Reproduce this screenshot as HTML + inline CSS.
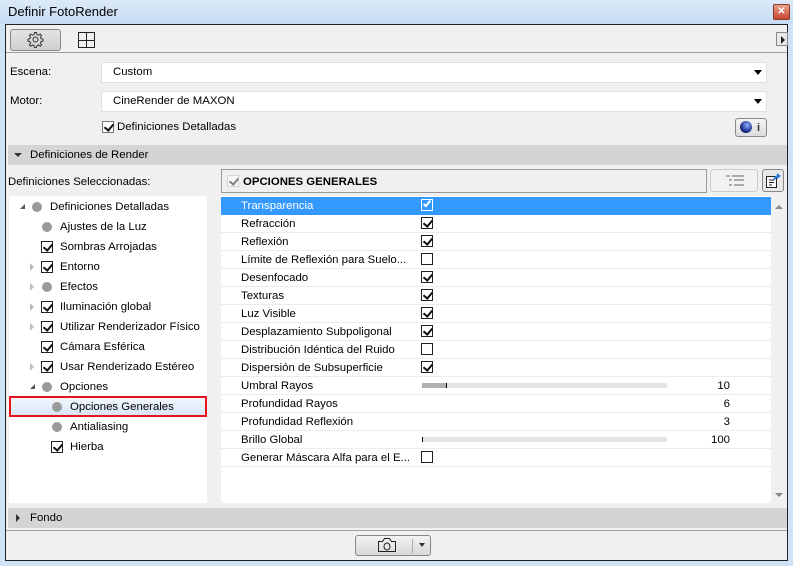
<!DOCTYPE html>
<html><head><meta charset="utf-8"><style>
*{box-sizing:border-box;margin:0;padding:0}
body{width:793px;height:566px;overflow:hidden;background:#cfe2f6;font-family:"Liberation Sans",sans-serif;font-size:11.4px;color:#000;position:relative}
.a{position:absolute}
.t{position:absolute;white-space:nowrap;line-height:14px}
.cb{position:absolute;width:12px;height:12px;border:1px solid #222;background:#fff}
.cb.c::after{content:"";position:absolute;left:3px;top:0px;width:4px;height:7px;border:solid #111;border-width:0 2px 2px 0;transform:rotate(40deg)}
.dot{position:absolute;width:10px;height:10px;border-radius:50%;background:#9a9a9a}
.row{position:absolute;left:221px;width:550px;height:18px;border-bottom:1px solid #ececec}
.tri{position:absolute;width:0;height:0}
</style></head><body>
<div class="a" style="left:0;top:0;width:793px;height:24px;background:linear-gradient(#dbe9f8,#c6dcf3)"></div>
<div class="t" style="left:8px;top:5px;font-size:13px">Definir FotoRender</div>
<div class="a" style="left:773px;top:4px;width:17px;height:16px;background:linear-gradient(#e8a08a,#c7442c);border:1px solid #8a3a2a;border-radius:2px;color:#fff;font-size:10px;font-weight:bold;text-align:center;line-height:14px">✕</div>
<div class="a" style="left:5px;top:24px;width:783px;height:537px;background:#f0f0f0;border:1px solid #222"></div>
<div class="a" style="left:10px;top:29px;width:51px;height:22px;border:1px solid #888;border-radius:3px;background:linear-gradient(#e4e4e4,#cfcfcf)"></div>
<svg class="a" style="left:27px;top:31px" width="17" height="17" viewBox="0 0 17 17"><circle cx="8.5" cy="8.5" r="2.5" fill="none" stroke="#333"/><path d="M7.5 1.5h2l.4 2 1.6.7 1.7-1.2 1.4 1.4-1.2 1.7.7 1.6 2 .4v2l-2 .4-.7 1.6 1.2 1.7-1.4 1.4-1.7-1.2-1.6.7-.4 2h-2l-.4-2-1.6-.7-1.7 1.2-1.4-1.4 1.2-1.7-.7-1.6-2-.4v-2l2-.4.7-1.6-1.2-1.7 1.4-1.4 1.7 1.2 1.6-.7z" fill="none" stroke="#333"/></svg>
<svg class="a" style="left:78px;top:32px" width="17" height="16"><rect x="0.5" y="0.5" width="16" height="15" fill="none" stroke="#222"/><path d="M8.5 1v14M1 8.5h15" stroke="#222"/></svg>
<div class="a" style="left:776px;top:32px;width:12px;height:14px;border:1px solid #888;background:#e8e8e8"></div>
<div class="tri" style="left:781px;top:36px;border-left:4px solid #222;border-top:4px solid transparent;border-bottom:4px solid transparent"></div>
<div class="a" style="left:6px;top:52px;width:781px;height:1px;background:#a0a0a0"></div>
<div class="t" style="left:10px;top:65px">Escena:</div>
<div class="a" style="left:101px;top:62px;width:666px;height:21px;background:#fff;border:1px solid #e0e0e0"></div>
<div class="t" style="left:113px;top:65px">Custom</div>
<div class="tri" style="left:754px;top:70px;border-top:5px solid #000;border-left:4px solid transparent;border-right:4px solid transparent"></div>
<div class="t" style="left:10px;top:94px">Motor:</div>
<div class="a" style="left:101px;top:91px;width:666px;height:21px;background:#fff;border:1px solid #e0e0e0"></div>
<div class="t" style="left:113px;top:94px">CineRender de MAXON</div>
<div class="tri" style="left:754px;top:99px;border-top:5px solid #000;border-left:4px solid transparent;border-right:4px solid transparent"></div>
<div class="cb c" style="left:102px;top:121px;border-color:#777"></div>
<div class="t" style="left:117px;top:120px">Definiciones Detalladas</div>
<div class="a" style="left:735px;top:118px;width:32px;height:19px;border:1px solid #888;border-radius:3px;background:linear-gradient(#f4f4f4,#dcdcdc)"></div>
<div class="a" style="left:740px;top:121px;width:12px;height:12px;border-radius:50%;background:radial-gradient(circle at 60% 35%,#8ab0ff,#1a2c8a 60%,#0a0a30)"></div>
<div class="t" style="left:757px;top:121px;font-size:11px;font-weight:bold;color:#333">i</div>
<div class="a" style="left:8px;top:145px;width:779px;height:20px;background:#d4d4d4;border-radius:2px"></div>
<div class="tri" style="left:14px;top:153px;border-top:4px solid #333;border-left:4px solid transparent;border-right:4px solid transparent"></div>
<div class="t" style="left:30px;top:148px">Definiciones de Render</div>
<div class="t" style="left:8px;top:175px">Definiciones Seleccionadas:</div>
<div class="a" style="left:221px;top:169px;width:486px;height:24px;border:1px solid #999;background:#f0f0f0"></div>
<div class="cb c" style="left:227px;top:175px;border-color:#bbb;opacity:.5"></div>
<div class="t" style="left:243px;top:175px;font-weight:bold">OPCIONES GENERALES</div>
<div class="a" style="left:710px;top:169px;width:48px;height:23px;border:1px solid #ccc;border-radius:3px;background:#f2f2f2"></div>
<svg class="a" style="left:726px;top:175px" width="18" height="12"><g fill="#aaa"><rect x="0" y="0" width="4" height="2"/><rect x="6" y="0" width="12" height="2"/><rect x="3" y="4" width="3" height="2"/><rect x="8" y="4" width="10" height="2"/><rect x="3" y="9" width="3" height="2"/><rect x="8" y="9" width="10" height="2"/></g></svg>
<div class="a" style="left:762px;top:169px;width:22px;height:23px;border:1px solid #888;border-radius:3px;background:#e8e8e8"></div>
<svg class="a" style="left:765px;top:172px" width="17" height="17"><rect x="1.5" y="4.5" width="10" height="11" fill="#fff" stroke="#222"/><path d="M4 8h5M4 10.5h5M4 13h3" stroke="#222"/><path d="M9 8c1-3 3-4 5-4" stroke="#2a7de1" stroke-width="2" fill="none"/><path d="M12 1l4 3-4 3z" fill="#2a7de1"/></svg>
<div class="a" style="left:9px;top:196px;width:198px;height:307px;background:#fff"></div>
<div class="a" style="left:221px;top:196px;width:550px;height:307px;background:#fff"></div>
<div class="a" style="left:771px;top:196px;width:16px;height:307px;background:#f0f0f0"></div>
<div class="tri" style="left:775px;top:205px;border-bottom:4px solid #888;border-left:4px solid transparent;border-right:4px solid transparent"></div>
<div class="tri" style="left:775px;top:493px;border-top:4px solid #888;border-left:4px solid transparent;border-right:4px solid transparent"></div>

<div class="tri" style="left:20px;top:204px;border-bottom:5px solid #555;border-left:5px solid transparent"></div>
<div class="dot" style="left:32px;top:202px"></div><div class="t" style="left:50px;top:200px">Definiciones Detalladas</div>
<div class="dot" style="left:42px;top:222px"></div><div class="t" style="left:60px;top:220px">Ajustes de la Luz</div>
<div class="cb c" style="left:41px;top:241px"></div><div class="t" style="left:60px;top:240px">Sombras Arrojadas</div>
<div class="tri" style="left:30px;top:263px;border-left:4px solid #bbb;border-top:4px solid transparent;border-bottom:4px solid transparent"></div>
<div class="cb c" style="left:41px;top:261px"></div><div class="t" style="left:60px;top:260px">Entorno</div>
<div class="tri" style="left:30px;top:283px;border-left:4px solid #bbb;border-top:4px solid transparent;border-bottom:4px solid transparent"></div>
<div class="dot" style="left:42px;top:282px"></div><div class="t" style="left:60px;top:280px">Efectos</div>
<div class="tri" style="left:30px;top:303px;border-left:4px solid #bbb;border-top:4px solid transparent;border-bottom:4px solid transparent"></div>
<div class="cb c" style="left:41px;top:301px"></div><div class="t" style="left:60px;top:300px">Iluminación global</div>
<div class="tri" style="left:30px;top:323px;border-left:4px solid #bbb;border-top:4px solid transparent;border-bottom:4px solid transparent"></div>
<div class="cb c" style="left:41px;top:321px"></div><div class="t" style="left:60px;top:320px">Utilizar Renderizador Físico</div>
<div class="cb c" style="left:41px;top:341px"></div><div class="t" style="left:60px;top:340px">Cámara Esférica</div>
<div class="tri" style="left:30px;top:363px;border-left:4px solid #bbb;border-top:4px solid transparent;border-bottom:4px solid transparent"></div>
<div class="cb c" style="left:41px;top:361px"></div><div class="t" style="left:60px;top:360px">Usar Renderizado Estéreo</div>
<div class="tri" style="left:30px;top:384px;border-bottom:5px solid #555;border-left:5px solid transparent"></div>
<div class="dot" style="left:42px;top:382px"></div><div class="t" style="left:60px;top:380px">Opciones</div>
<div class="a" style="left:9px;top:396px;width:198px;height:21px;background:linear-gradient(#f2f7fd,#d8e6f8);border:2px solid #e8141c"></div>
<div class="dot" style="left:52px;top:402px"></div><div class="t" style="left:70px;top:400px">Opciones Generales</div>
<div class="dot" style="left:52px;top:422px"></div><div class="t" style="left:70px;top:420px">Antialiasing</div>
<div class="cb c" style="left:51px;top:441px"></div><div class="t" style="left:70px;top:440px">Hierba</div>

<div class="row" style="top:197px;background:#3399ff;border-color:#3399ff"></div>
<div class="t" style="left:241px;top:199px;color:#fff">Transparencia</div>
<div class="cb" style="left:421px;top:199px;border-color:#fff;background:#3399ff"></div>
<div class="a" style="left:425px;top:199px;width:4px;height:8px;border:solid #fff;border-width:0 2px 2px 0;transform:rotate(40deg)"></div>
<div class="row" style="top:215px"></div><div class="t" style="left:241px;top:217px">Refracción</div><div class="cb c" style="left:421px;top:217px"></div>
<div class="row" style="top:233px"></div><div class="t" style="left:241px;top:235px">Reflexión</div><div class="cb c" style="left:421px;top:235px"></div>
<div class="row" style="top:251px"></div><div class="t" style="left:241px;top:253px">Límite de Reflexión para Suelo...</div><div class="cb" style="left:421px;top:253px"></div>
<div class="row" style="top:269px"></div><div class="t" style="left:241px;top:271px">Desenfocado</div><div class="cb c" style="left:421px;top:271px"></div>
<div class="row" style="top:287px"></div><div class="t" style="left:241px;top:289px">Texturas</div><div class="cb c" style="left:421px;top:289px"></div>
<div class="row" style="top:305px"></div><div class="t" style="left:241px;top:307px">Luz Visible</div><div class="cb c" style="left:421px;top:307px"></div>
<div class="row" style="top:323px"></div><div class="t" style="left:241px;top:325px">Desplazamiento Subpoligonal</div><div class="cb c" style="left:421px;top:325px"></div>
<div class="row" style="top:341px"></div><div class="t" style="left:241px;top:343px">Distribución Idéntica del Ruido</div><div class="cb" style="left:421px;top:343px"></div>
<div class="row" style="top:359px"></div><div class="t" style="left:241px;top:361px">Dispersión de Subsuperficie</div><div class="cb c" style="left:421px;top:361px"></div>
<div class="row" style="top:377px"></div><div class="t" style="left:241px;top:379px">Umbral Rayos</div>
<div class="a" style="left:422px;top:383px;width:245px;height:5px;background:#e4e4e4"></div><div class="a" style="left:422px;top:383px;width:24px;height:5px;background:#b0b0b0"></div><div class="a" style="left:446px;top:383px;width:1px;height:5px;background:#000"></div>
<div class="t" style="left:700px;top:379px;width:30px;text-align:right">10</div>
<div class="row" style="top:395px"></div><div class="t" style="left:241px;top:397px">Profundidad Rayos</div><div class="t" style="left:700px;top:397px;width:30px;text-align:right">6</div>
<div class="row" style="top:413px"></div><div class="t" style="left:241px;top:415px">Profundidad Reflexión</div><div class="t" style="left:700px;top:415px;width:30px;text-align:right">3</div>
<div class="row" style="top:431px"></div><div class="t" style="left:241px;top:433px">Brillo Global</div>
<div class="a" style="left:422px;top:437px;width:245px;height:5px;background:#e4e4e4"></div><div class="a" style="left:422px;top:437px;width:1px;height:5px;background:#000"></div>
<div class="t" style="left:700px;top:433px;width:30px;text-align:right">100</div>
<div class="row" style="top:449px"></div><div class="t" style="left:241px;top:451px">Generar Máscara Alfa para el E...</div><div class="cb" style="left:421px;top:451px"></div>

<div class="a" style="left:8px;top:508px;width:779px;height:20px;background:#d4d4d4;border-radius:2px"></div>
<div class="tri" style="left:16px;top:514px;border-left:4px solid #333;border-top:4px solid transparent;border-bottom:4px solid transparent"></div>
<div class="t" style="left:30px;top:511px">Fondo</div>
<div class="a" style="left:6px;top:530px;width:781px;height:1px;background:#a0a0a0"></div>
<div class="a" style="left:355px;top:535px;width:76px;height:21px;border:1px solid #888;border-radius:3px;background:linear-gradient(#f4f4f4,#d8d8d8)"></div>
<svg class="a" style="left:377px;top:537px" width="20" height="16"><path d="M1.5 4.5h4l2-3h5l2 3h4v10h-17z" fill="none" stroke="#222"/><ellipse cx="10" cy="9.5" rx="3" ry="3.5" fill="none" stroke="#222"/></svg>
<div class="a" style="left:412px;top:539px;width:1px;height:14px;background:#aaa"></div>
<div class="tri" style="left:419px;top:543px;border-top:4px solid #333;border-left:3px solid transparent;border-right:3px solid transparent"></div>
</body></html>
